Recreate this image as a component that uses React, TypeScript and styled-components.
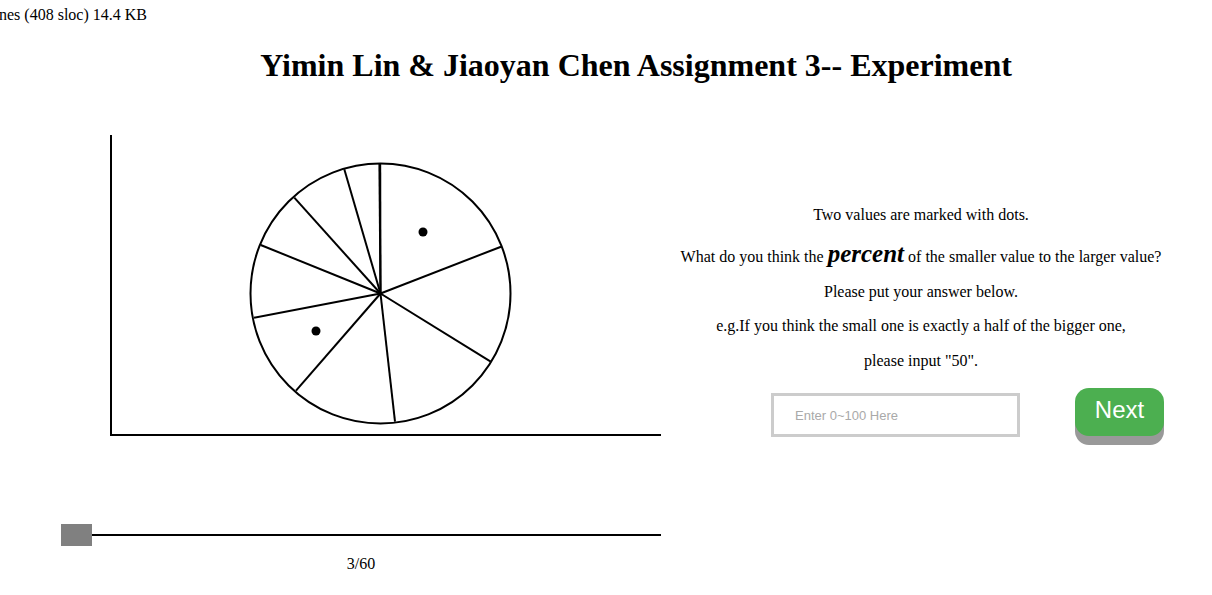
import React from "react";
import styled, { createGlobalStyle } from "styled-components";

const Global = createGlobalStyle`
  html, body { margin: 0; padding: 0; background: #fff; }
  body { font-family: "Liberation Serif", "Times New Roman", serif; color: #000; }
`;

const Page = styled.div`
  width: 1212px;
  padding-top: 6px;
`;

const FileInfo = styled.div`
  font-size: 16px;
  line-height: 18px;
  margin-left: -1px;
`;

const Content = styled.div`
  margin-left: 61px;
  width: 1150px;
`;

const Title = styled.h1`
  margin: 23px 0 0;
  font-size: 32px;
  line-height: 37px;
  font-weight: bold;
  text-align: center;
`;

const Row = styled.div`
  display: flex;
  margin-top: 36px;
`;

const LeftCol = styled.div`
  width: 600px;
  display: flex;
  flex-direction: column;
`;

const Chart = styled.svg`
  display: block;
  width: 600px;
  height: 320px;
`;

const Slider = styled.div`
  display: flex;
  align-items: center;
  margin-top: 84px;
  height: 22px;
`;

const Thumb = styled.div`
  width: 31px;
  height: 22px;
  background: #808080;
`;

const Track = styled.div`
  flex: 1;
  height: 2px;
  background: #000;
`;

const Counter = styled.div`
  margin-top: 9px;
  text-align: center;
  font-size: 16px;
  line-height: 18px;
`;

const RightCol = styled.div`
  width: 520px;
  padding-top: 86px;
  display: flex;
  flex-direction: column;
  align-items: center;
`;

const Line = styled.p<{ $mt?: number }>`
  margin: ${(p) => p.$mt ?? 0}px 0 0;
  font-size: 16px;
  line-height: 18px;
  text-align: center;
`;

const Emph = styled.em`
  font-size: 25px;
  font-weight: bold;
  font-style: italic;
`;

const AnswerRow = styled.div`
  display: flex;
  align-items: flex-start;
  gap: 55px;
  align-self: flex-start;
  margin-left: 110px;
  margin-top: 18px;
`;

const Input = styled.input`
  box-sizing: border-box;
  width: 249px;
  height: 44px;
  margin-top: 5px;
  border: 3px solid #ccc;
  padding: 0 0 0 21px;
  font-family: "Liberation Sans", Arial, sans-serif;
  font-size: 13px;
  outline: none;
  &::placeholder { color: #a9a9a9; }
`;

const NextButton = styled.button`
  width: 89px;
  height: 48px;
  border: none;
  border-radius: 14px;
  background: #4caf50;
  color: #fff;
  font-family: "Liberation Sans", Arial, sans-serif;
  font-size: 24px;
  box-shadow: 0 9px #999;
  padding: 0 0 4px;
  cursor: pointer;
`;

const C = { x: 380.5, y: 293.5 };
const spokes: [number, number][] = [
  [380.2, 163.5],
  [501, 246.7],
  [490.7, 361.7],
  [395, 421.7],
  [296, 390.7],
  [254, 317.7],
  [260.7, 245],
  [294.3, 197.7],
  [344.3, 169.3],
];

export default function App() {
  return (
    <Page>
      <Global />
      <FileInfo>nes (408 sloc) 14.4 KB</FileInfo>
      <Content>
        <Title>Yimin Lin &amp; Jiaoyan Chen Assignment 3-- Experiment</Title>
        <Row>
          <LeftCol>
            <Chart viewBox="61 120 600 320">
              <line x1={111} y1={135} x2={111} y2={436} stroke="#000" strokeWidth={2} />
              <line x1={110} y1={435} x2={661} y2={435} stroke="#000" strokeWidth={2} />
              <circle cx={C.x} cy={C.y} r={130} fill="#fff" stroke="#000" strokeWidth={2} />
              {spokes.map(([x, y], i) => (
                <line key={i} x1={C.x} y1={C.y} x2={x} y2={y} stroke="#000" strokeWidth={2} />
              ))}
              <line x1={C.x} y1={C.y} x2={379.4} y2={163.5} stroke="#000" strokeWidth={2} />
              <circle cx={423} cy={232} r={4.5} fill="#000" />
              <circle cx={316} cy={331} r={4.5} fill="#000" />
            </Chart>
            <Slider>
              <Thumb />
              <Track />
            </Slider>
            <Counter>3/60</Counter>
          </LeftCol>
          <RightCol>
            <Line>Two values are marked with dots.</Line>
            <Line $mt={21}>
              What do you think the <Emph>percent</Emph> of the smaller value to the larger value?
            </Line>
            <Line $mt={17}>Please put your answer below.</Line>
            <Line $mt={16}>e.g.If you think the small one is exactly a half of the bigger one,</Line>
            <Line $mt={17}>please input "50".</Line>
            <AnswerRow>
              <Input placeholder="Enter 0~100 Here" />
              <NextButton>Next</NextButton>
            </AnswerRow>
          </RightCol>
        </Row>
      </Content>
    </Page>
  );
}
